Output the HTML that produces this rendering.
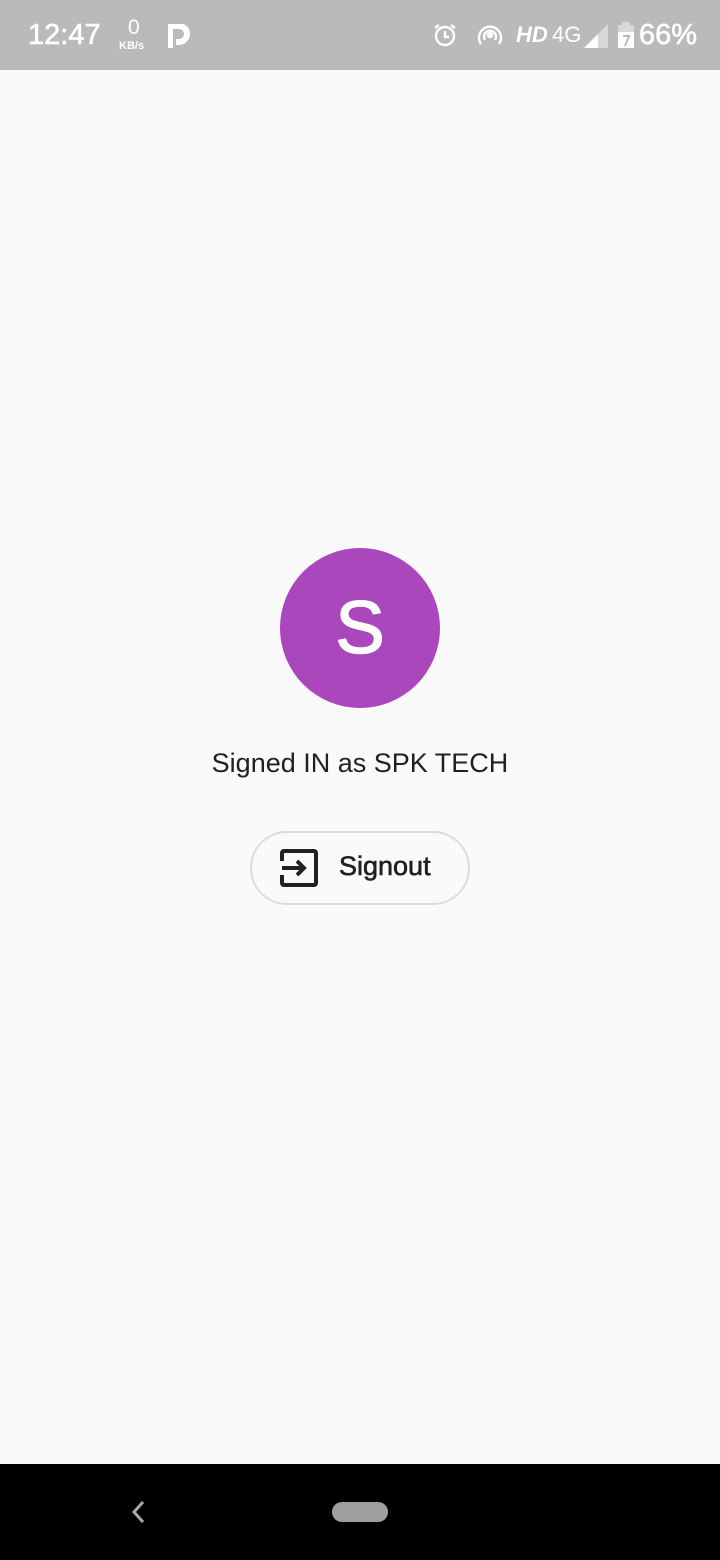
<!DOCTYPE html>
<html><head><style>
body{margin:0;width:720px;height:1560px;background:#fafafa;font-family:"Liberation Sans",sans-serif;position:relative;overflow:hidden}
.sb{position:absolute;top:0;left:0;width:720px;height:70px;background:#bababa;color:#fff}
.t{position:absolute;font-weight:normal}
.nav{position:absolute;left:0;top:1464px;width:720px;height:96px;background:#000}
</style></head><body>
<div class="sb">
<div class="t" style="left:28px;top:19px;font-size:29px;-webkit-text-stroke:0.6px #fff">12:47</div>
<div class="t" style="left:128px;top:16px;font-size:21px">0</div>
<div class="t" style="left:119px;top:40px;font-size:11px;font-weight:bold">KB/s</div>
<svg style="position:absolute;left:168px;top:24px" width="22" height="24"><path d="M2 24V2h9a8 8 0 0 1 0 16H8" stroke="#fff" stroke-width="6" fill="none"/></svg>
<svg style="position:absolute;left:432px;top:22px" width="26" height="26" fill="none" stroke="#fff" stroke-width="2.4"><circle cx="13" cy="14" r="9"/><path d="M13 9v6h4M3 6l4-3M23 6l-4-3"/></svg>
<svg style="position:absolute;left:476px;top:22px" width="28" height="26" fill="none" stroke="#fff" stroke-width="2.4"><path d="M5 22A11 11 0 1 1 23 22M9 18a6 6 0 1 1 10 0"/><circle cx="14" cy="13" r="2" fill="#fff"/></svg>
<div class="t" style="left:516px;top:22px;font-size:22px;font-weight:bold;font-style:italic">HD</div>
<div class="t" style="left:552px;top:22px;font-size:22px">4G</div>
<svg style="position:absolute;left:584px;top:24px" width="24" height="24"><path d="M0 24L24 0V24Z" fill="#d8d8d8"/><path d="M0 24L14 10V24Z" fill="#fff"/></svg>
<svg style="position:absolute;left:618px;top:22px" width="16" height="26"><rect x="4" y="0" width="8" height="3" fill="#d8d8d8"/><rect x="0" y="3" width="16" height="23" fill="#d8d8d8"/><rect x="0" y="10" width="16" height="16" fill="#fff"/><path d="M5 14h6l-4 10" stroke="#bababa" stroke-width="2" fill="none"/></svg>
<div class="t" style="left:639px;top:19px;font-size:29px;-webkit-text-stroke:0.6px #fff">66%</div>
</div>
<div style="position:absolute;left:280px;top:548px;width:160px;height:160px;border-radius:50%;background:#ab47bc;color:#fff;font-size:74px;text-align:center;line-height:160px;-webkit-text-stroke:1.5px #fff">S</div>
<div style="position:absolute;left:0;width:720px;top:748px;text-align:center;font-size:27px;color:#212121">Signed IN as SPK TECH</div>
<div style="position:absolute;left:250px;top:831px;width:216px;height:70px;border:2px solid #dcdcdc;border-radius:37px"></div>
<svg style="position:absolute;left:280px;top:849px" width="38" height="38" fill="none" stroke="#212121" stroke-width="4"><path d="M2 12V4a2 2 0 0 1 2-2h30a2 2 0 0 1 2 2v30a2 2 0 0 1-2 2H4a2 2 0 0 1-2-2v-8"/><path d="M2 19h22M17 12l7 7-7 7"/></svg>
<div style="position:absolute;left:339px;top:851px;font-size:27px;color:#212121;-webkit-text-stroke:0.6px #212121">Signout</div>
<div class="nav">
<svg style="position:absolute;left:130px;top:36px" width="16" height="24" fill="none" stroke="#aaa" stroke-width="3"><path d="M13 2L4 12l9 10"/></svg>
<div style="position:absolute;left:332px;top:38px;width:56px;height:20px;border-radius:10px;background:#9e9e9e"></div>
</div>
</body></html>
